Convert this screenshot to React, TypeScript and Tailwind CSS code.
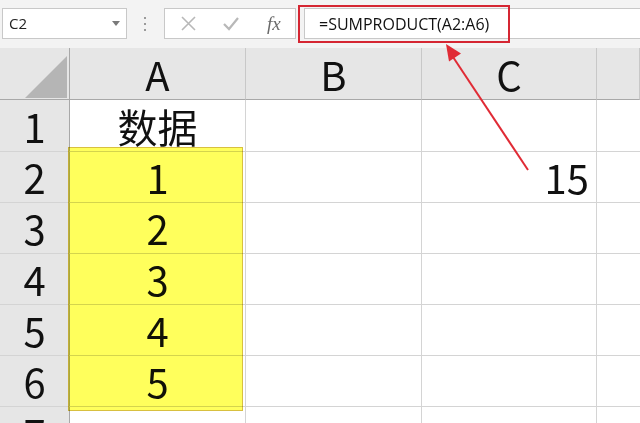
import React from "react";

const cellFont = {
  fontFamily: '"Noto Sans CJK SC", "Liberation Sans", sans-serif',
};

const rows = [
  { n: "1", a: "数据", c: "" },
  { n: "2", a: "1", c: "15" },
  { n: "3", a: "2", c: "" },
  { n: "4", a: "3", c: "" },
  { n: "5", a: "4", c: "" },
  { n: "6", a: "5", c: "" },
  { n: "7", a: "", c: "" },
];

function FormulaBar() {
  return (
    <div className="relative flex h-[48px] items-start bg-[#f3f3f3] pt-[8px] font-['Open_Sans',sans-serif]">
      {/* Name box */}
      <div className="ml-[2px] flex h-[31px] w-[125px] items-center justify-between border border-[#c8c8c8] bg-white pl-[6px] pr-[6px]">
        <span className="text-[15px] text-[#222]">C2</span>
        <svg width="8" height="5" viewBox="0 0 8 5">
          <path d="M0 0 L8 0 L4 5 Z" fill="#7a7a7a" />
        </svg>
      </div>

      {/* Separator dots */}
      <div className="ml-[17px] mr-[18px] flex h-[31px] flex-col items-center justify-center gap-[4px]">
        <span className="h-[2px] w-[2px] bg-[#9a9a9a]" />
        <span className="h-[2px] w-[2px] bg-[#9a9a9a]" />
        <span className="h-[2px] w-[2px] bg-[#9a9a9a]" />
      </div>

      {/* Cancel / enter / fx */}
      <div className="flex h-[31px] w-[132px] items-center border border-[#c8c8c8] bg-white pl-[16px]">
        <svg width="15" height="15" viewBox="0 0 15 15">
          <path d="M1 1 L14 14 M14 1 L1 14" stroke="#b8b8b8" strokeWidth="1.6" />
        </svg>
        <svg className="ml-[27px]" width="16" height="14" viewBox="0 0 16 14">
          <path d="M1 7 L6 12 L15 1" stroke="#b8b8b8" strokeWidth="2.2" fill="none" />
        </svg>
        <span className="ml-[28px] font-['Liberation_Serif',serif] text-[19px] italic leading-none text-[#6a6a6a]">
          fx
        </span>
      </div>

      {/* Formula input */}
      <div className="ml-[8px] flex h-[31px] flex-1 items-center border-y border-l border-[#c8c8c8] bg-white pl-[14px]">
        <span className="text-[16px] text-[#111]">=SUMPRODUCT(A2:A6)</span>
      </div>

      {/* Red highlight box */}
      <div className="absolute left-[298px] top-[5px] h-[38px] w-[212px] border-2 border-[#d52632]" />
    </div>
  );
}

function Sheet() {
  return (
    <div
      className="grid grid-cols-[70px_176px_176px_175px_1fr] grid-rows-[52px_52px_51px_51px_51px_51px_51px_51px]"
      style={cellFont}
    >
      {/* Header row */}
      <div className="relative border-b border-r border-[#a8a8a8] bg-[#e6e6e6]">
        <svg className="absolute left-0 top-0" width="70" height="52" viewBox="0 0 70 52">
          <path d="M25 50 L67 50 L67 8 Z" fill="#b5b5b5" />
        </svg>
      </div>
      {["A", "B", "C", ""].map((h, i) => (
        <div
          key={i}
          className="flex items-center justify-center border-b border-r border-b-[#a8a8a8] border-r-[#c8c8c8] bg-[#e6e6e6] text-[40px] leading-[1.1] text-[#111]"
        >
          {h}
        </div>
      ))}

      {rows.map((r) => (
        <React.Fragment key={r.n}>
          <div className="flex items-center justify-center border-b border-r border-b-[#d4d4d4] border-r-[#a8a8a8] bg-[#e6e6e6] text-[40px] leading-[1.1] text-[#111]">
            {r.n}
          </div>
          <div className="flex items-center justify-center border-b border-r border-[#d4d4d4] bg-white text-[40px] leading-[1.1] text-[#111]">
            {r.a}
          </div>
          <div className="border-b border-r border-[#d4d4d4] bg-white" />
          <div className="flex items-center justify-end border-b border-r border-[#d4d4d4] bg-white pr-[7px] text-[40px] leading-[1.1] text-[#111]">
            {r.c}
          </div>
          <div className="border-b border-[#d4d4d4] bg-white" />
        </React.Fragment>
      ))}
    </div>
  );
}

export default function App() {
  return (
    <div className="relative h-[423px] w-[640px] overflow-hidden bg-white">
      <FormulaBar />
      <Sheet />

      {/* Yellow selection overlay */}
      <div className="pointer-events-none absolute left-[68px] top-[147px] h-[264px] w-[175px] border-[1.5px] border-[#d8c040] bg-[#ffff5c] mix-blend-multiply" />

      {/* Red arrow */}
      <svg
        className="pointer-events-none absolute left-0 top-0"
        width="640"
        height="423"
        viewBox="0 0 640 423"
      >
        <line x1="528" y1="170" x2="453" y2="57" stroke="#e02b35" strokeWidth="2" />
        <path d="M446 44 L461 53.5 L449 61.5 Z" fill="#e02b35" />
      </svg>
    </div>
  );
}
